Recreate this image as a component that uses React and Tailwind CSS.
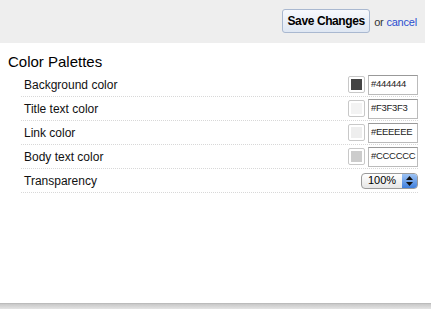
export default function App() {
  const rows = [
    { label: "Background color", swatch: "#444444", value: "#444444" },
    { label: "Title text color", swatch: "#F3F3F3", value: "#F3F3F3" },
    { label: "Link color", swatch: "#EEEEEE", value: "#EEEEEE" },
    { label: "Body text color", swatch: "#CCCCCC", value: "#CCCCCC" },
  ];
  return (
    <div className="w-[431px] h-[309px] bg-white flex flex-col overflow-hidden" style={{ fontFamily: '"Liberation Sans", Arial, sans-serif' }}>
      <div className="w-[425px] h-[43px] bg-[#eeeeee] flex items-start justify-end pt-[9px] pr-[8px] shrink-0">
        <button className="h-[24px] w-[88px] px-0 rounded-[3px] border border-[#a9b8d0] bg-gradient-to-b from-[#f7f9fd] to-[#dfe7f3] text-[12px] tracking-[-0.4px] font-bold text-black flex items-center justify-center whitespace-nowrap">
          Save Changes
        </button>
        <span className="ml-[4px] mt-[5px] text-[11px] tracking-[-0.2px] text-[#333]">or <a className="text-[#2a4fd0]">cancel</a></span>
      </div>
      <div className="pl-[8px] pt-[10px] text-[15px] leading-[17px] text-black">Color Palettes</div>
      <div className="ml-[21px] mr-[13px] mt-[3px] flex flex-col">
        {rows.map((r) => (
          <div key={r.label} className="h-[24px] flex items-center border-b border-dotted border-[#d8d8d8]">
            <span className="pl-[3px] text-[12px] text-[#111] flex-1">{r.label}</span>
            <span className="w-[17px] h-[17px] rounded-[2px] border border-[#c8c8c8] p-[2px] bg-white flex">
              <span className="flex-1" style={{ backgroundColor: r.swatch }} />
            </span>
            <span className="ml-[3px] w-[50px] h-[20px] border border-[#bbbbbb] border-t-[#999] text-[9.5px] tracking-[-0.3px] pl-[2px] flex items-center text-[#222] bg-white whitespace-nowrap overflow-hidden">
              {r.value}
            </span>
          </div>
        ))}
        <div className="h-[24px] flex items-center border-b border-dotted border-[#d8d8d8]">
          <span className="pl-[3px] text-[12px] text-[#111] flex-1">Transparency</span>
          <span className="w-[57px] h-[16px] rounded-[4px] border border-[#9a9a9a] bg-gradient-to-b from-white to-[#e6e6e6] flex items-center overflow-hidden">
            <span className="flex-1 text-[11px] text-center text-black">100%</span>
            <span className="w-[15px] h-full bg-gradient-to-b from-[#9ec3f3] to-[#3f7fdc] flex flex-col items-center justify-center gap-[2px]">
              <svg width="7" height="4" viewBox="0 0 7 4"><path d="M3.5 0 L7 4 L0 4Z" fill="#111" /></svg>
              <svg width="7" height="4" viewBox="0 0 7 4"><path d="M0 0 L7 0 L3.5 4Z" fill="#111" /></svg>
            </span>
          </span>
        </div>
      </div>
      <div className="flex-1" />
      <div className="h-[6px] bg-gradient-to-b from-[#c8c8c8] to-[#e4e4e4] border-t border-[#bbbbbb] shrink-0" />
    </div>
  );
}
